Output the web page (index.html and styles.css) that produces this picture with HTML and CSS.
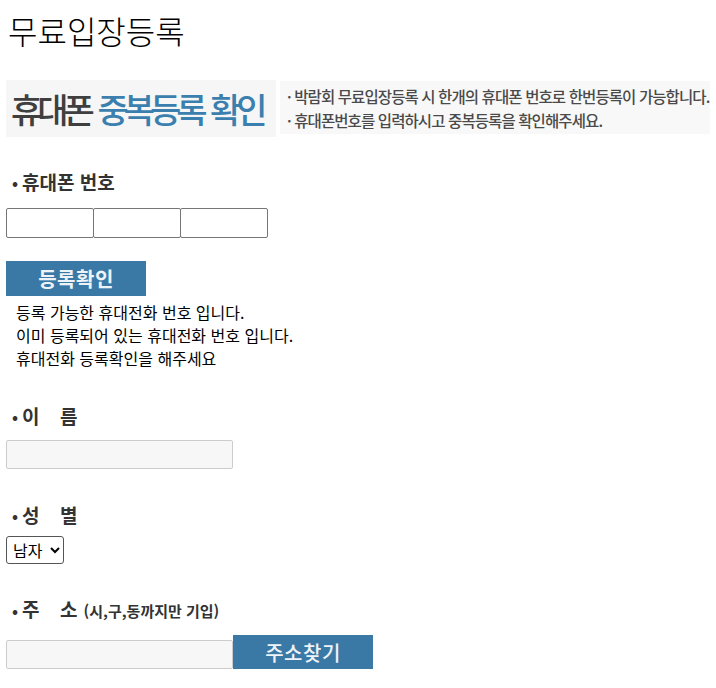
FILE: index.html
```html
<!DOCTYPE html>
<html lang="ko">
<head>
<meta charset="utf-8">
<title>무료입장등록</title>
<link rel="stylesheet" href="styles.css">
</head>
<body>
<div class="page">
  <h1 class="title">무료입장등록</h1>

  <div class="banner-row">
    <div class="banner-main"><span class="dark">휴대폰</span> <span class="blue">중복등록 확인</span></div>
    <div class="banner-note">
      <p>· 박람회 무료입장등록 시 한개의 휴대폰 번호로 한번등록이 가능합니다.</p>
      <p>· 휴대폰번호를 입력하시고 중복등록을 확인해주세요.</p>
    </div>
  </div>

  <div class="label label-phone"><span class="dot">•</span>휴대폰 번호</div>
  <div class="phone-row">
    <input class="phone" type="text">
    <input class="phone" type="text">
    <input class="phone" type="text">
  </div>

  <button class="btn btn-check" type="button">등록확인</button>
  <div class="messages">
    <p>등록 가능한 휴대전화 번호 입니다.</p>
    <p>이미 등록되어 있는 휴대전화 번호 입니다.</p>
    <p>휴대전화 등록확인을 해주세요</p>
  </div>

  <div class="label label-name"><span class="dot">•</span><span class="w1">이</span><span class="w2">름</span></div>
  <input class="field" type="text">

  <div class="label label-gender"><span class="dot">•</span><span class="w1">성</span><span class="w2">별</span></div>
  <select class="gender">
    <option>남자</option>
    <option>여자</option>
  </select>

  <div class="label label-addr"><span class="dot">•</span><span class="w1">주</span><span class="w2">소</span><span class="hint">(시,구,동까지만 기입)</span></div>
  <div class="addr-row">
    <input class="field" type="text">
    <button class="btn btn-addr" type="button">주소찾기</button>
  </div>
</div>
</body>
</html>
```

FILE: styles.css
```css
html, body {
  margin: 0;
  padding: 0;
  background: #fff;
}
body {
  font-family: "Noto Sans CJK KR", "Noto Sans", sans-serif;
  color: #000;
}
.page {
  padding: 0 6px;
}
p { margin: 0; }

.title {
  margin: 0;
  padding: 10px 0 0 2px;
  font-size: 32px;
  line-height: 40px;
  font-weight: 300;
  letter-spacing: 0;
}

.banner-row {
  display: flex;
  align-items: flex-start;
  gap: 4px;
  margin-top: 30px;
}
.banner-main {
  width: 270px;
  height: 57px;
  background: #f6f6f6;
  box-sizing: border-box;
  padding-left: 5px;
  font-size: 34px;
  line-height: 57px;
  font-weight: 500;
  letter-spacing: -5px;
  word-spacing: 3px;
  white-space: nowrap;
}
.banner-main .dark { color: #3f3f3f; }
.banner-main .blue { color: #3b7fae; }
.banner-note {
  flex: 1;
  margin-top: 1px;
  height: 53px;
  background: #f8f8f8;
  box-sizing: border-box;
  padding: 3px 0 0 7px;
  font-size: 15.5px;
  line-height: 24px;
  font-weight: 500;
  color: #4a4a4a;
  letter-spacing: -0.9px;
  white-space: nowrap;
}

.label {
  display: flex;
  align-items: baseline;
  font-size: 19px;
  line-height: 24px;
  font-weight: 700;
  color: #333;
  padding-left: 6px;
  letter-spacing: 0;
}
.dot {
  align-self: center;
  font-size: 16px;
  line-height: 24px;
  margin-right: 4px;
}
.w1 { width: 38px; }
.hint {
  font-size: 15px;
  margin-left: 6px;
}
.label-phone { margin-top: 33px; }
.label-name { margin-top: 34px; }
.label-gender { margin-top: 34px; }
.label-addr { margin-top: 33px; }

.phone-row {
  display: flex;
  margin-top: 14px;
}
.phone {
  width: 88px;
  height: 30px;
  box-sizing: border-box;
  margin: 0 -1px 0 0;
  border: 1px solid #767676;
  border-radius: 2px;
  padding: 1px 2px;
  background: #fff;
}

.btn {
  display: block;
  border: 0;
  border-radius: 0;
  background: #3a79a6;
  color: #eef3f7;
  font-family: "Noto Sans CJK KR", "Noto Sans", sans-serif;
  font-size: 20px;
  padding: 0;
  letter-spacing: 0.5px;
}
.btn-check {
  width: 140px;
  height: 35px;
  margin-top: 23px;
  font-weight: 700;
}

.messages {
  margin-top: 5px;
  padding-left: 10px;
  font-size: 16px;
  line-height: 23px;
}

.field {
  display: block;
  width: 227px;
  height: 29px;
  box-sizing: border-box;
  margin: 12px 0 0;
  border: 1px solid #cccccc;
  border-radius: 2px;
  background: #f7f7f7;
  padding: 1px 4px;
}

.gender {
  display: block;
  margin-top: 9px;
  width: 58px;
  height: 28px;
  box-sizing: border-box;
  border: 1px solid #555;
  border-radius: 3px;
  background: #fff;
  font-family: "Noto Sans CJK KR", "Noto Sans", sans-serif;
  font-size: 16px;
  color: #000;
  padding: 0 2px;
}

.addr-row {
  display: flex;
  align-items: flex-end;
  margin-top: 12px;
}
.addr-row .field { margin: 0; }
.btn-addr {
  width: 140px;
  height: 34px;
  font-weight: 500;
}
```
